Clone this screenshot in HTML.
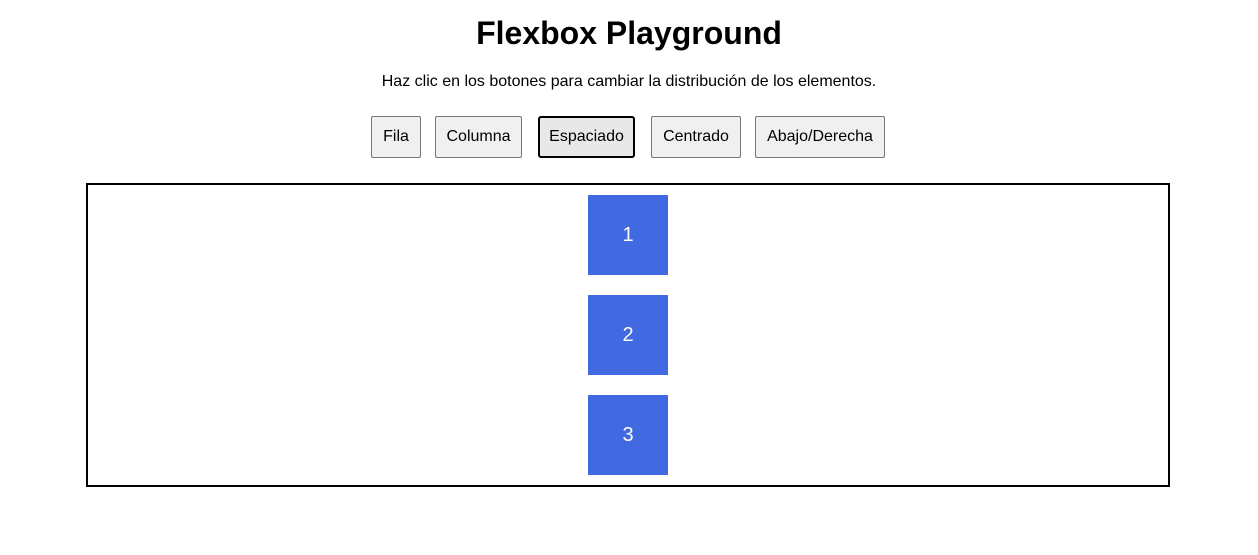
<!DOCTYPE html>
<html><head><meta charset="utf-8"><style>
*{box-sizing:border-box;margin:0;padding:0}
body{width:1258px;height:555px;background:#fff;font-family:"Liberation Sans",Arial,sans-serif;position:relative;overflow:hidden}
h1{position:absolute;top:13px;left:0;width:1258px;text-align:center;font-size:32px;font-weight:bold;line-height:40px}
p{position:absolute;top:72px;left:0;width:1258px;text-align:center;font-size:16px;line-height:20px}
.b{position:absolute;top:116px;height:42px;background:#f0f0f0;border:1px solid #767676;border-radius:2px;font-size:16px;text-align:center;line-height:40px;color:#000}
.b.a{border:2px solid #000;background:#e8e8e8;border-radius:3px;line-height:38px}
.c{position:absolute;left:86px;top:183px;width:1084px;height:304px;border:2px solid #000}
.x{position:absolute;left:588px;width:80px;height:80px;background:#4169e1;color:#fff;font-size:20px;text-align:center;line-height:80px}
</style></head><body>
<h1>Flexbox Playground</h1>
<p>Haz clic en los botones para cambiar la distribución de los elementos.</p>
<div class="b" style="left:371px;width:50px">Fila</div>
<div class="b" style="left:435px;width:87px">Columna</div>
<div class="b a" style="left:538px;width:97px">Espaciado</div>
<div class="b" style="left:651px;width:90px">Centrado</div>
<div class="b" style="left:755px;width:130px">Abajo/Derecha</div>
<div class="c"></div>
<div class="x" style="top:195px">1</div>
<div class="x" style="top:295px">2</div>
<div class="x" style="top:395px">3</div>
</body></html>
